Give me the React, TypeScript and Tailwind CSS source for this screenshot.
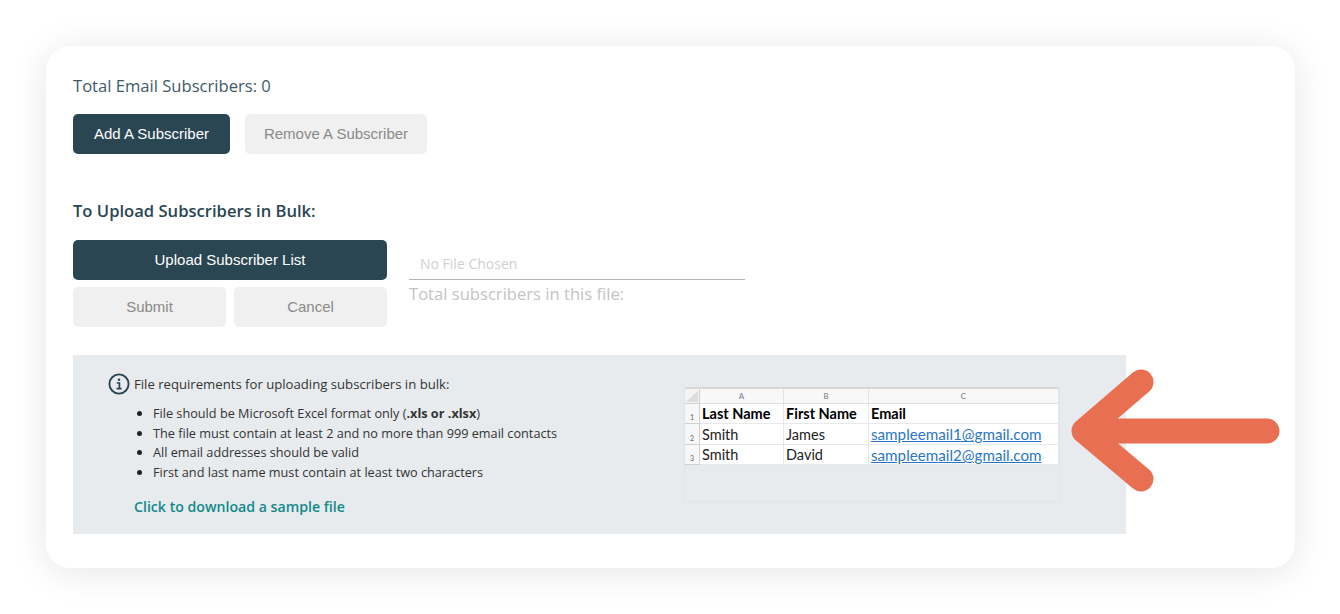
import React from 'react';

const OPEN = "font-['Open_Sans',sans-serif]";
const ARIAL = "font-['Liberation_Sans',Arial,sans-serif]";

function SolidButton({ label, className = '' }: { label: string; className?: string }) {
  return (
    <button className={`h-10 rounded-[5px] bg-[#2a4653] text-[15px] text-white ${ARIAL} ${className}`}>
      {label}
    </button>
  );
}

function MutedButton({ label, className = '' }: { label: string; className?: string }) {
  return (
    <button className={`h-10 rounded-[5px] bg-[#f0f0f0] text-[15px] text-[#8a8a8a] ${ARIAL} ${className}`}>
      {label}
    </button>
  );
}

function SampleSheet() {
  const rows = [
    ['Smith', 'James', 'sampleemail1@gmail.com'],
    ['Smith', 'David', 'sampleemail2@gmail.com'],
  ];
  const cell = 'border-r border-b border-[#e6e8e9] pt-[2px] pl-[2px] flex items-center';
  const rowHead = 'flex items-end justify-center border-r border-b border-[#d0d0d0] bg-[#f7f7f7] pb-[2px] text-[7px] text-[#666]';
  return (
    <div className="mt-[32px] -ml-[1px] h-[115px] w-[376px] shrink-0 border border-t-0 border-[#e2e5e8] font-['Lato',sans-serif]">
      <div className="grid grid-cols-[15px_84px_85px_1fr] grid-rows-[15px_20px_21px_20px] border-t-2 border-[#d8d8d8] bg-white text-[14.5px] leading-none text-[#222]">
        <div className="relative border-r border-b border-[#d0d0d0] bg-[#f4f4f4]">
          <svg viewBox="0 0 14 14" className="absolute inset-0 h-full w-full">
            <path d="M1 13 L13 13 L13 2 Z" fill="#dcdcdc" />
          </svg>
        </div>
        {['A', 'B', 'C'].map((h) => (
          <div key={h} className="flex items-center justify-center border-r border-b border-[#e2e2e2] bg-[#f8f8f8] text-[8px] text-[#777]">
            {h}
          </div>
        ))}
        <div className={rowHead}>1</div>
        <div className={`${cell} font-bold text-black`}>Last Name</div>
        <div className={`${cell} font-bold text-black`}>First Name</div>
        <div className={`${cell} font-bold text-black`}>Email</div>
        {rows.map((r, i) => (
          <React.Fragment key={i}>
            <div className={rowHead}>{i + 2}</div>
            <div className={cell}>{r[0]}</div>
            <div className={cell}>{r[1]}</div>
            <div className={`${cell} text-[15.2px] text-[#2a76c6] underline`}>{r[2]}</div>
          </React.Fragment>
        ))}
      </div>
    </div>
  );
}

export default function App() {
  return (
    <div className="h-[614px] w-[1340px] bg-white pt-[46px] pl-[46px]">
      <div className={`relative h-[522px] w-[1249px] rounded-[24px] bg-white pt-[28px] pl-[27px] shadow-[0_4px_36px_rgba(0,0,0,0.1)] ${OPEN}`}>
        <p className="text-[16.6px] leading-6 text-[#3f5a66]">Total Email Subscribers: 0</p>

        <div className="mt-[16px] flex gap-[15px]">
          <SolidButton label="Add A Subscriber" className="w-[157px]" />
          <MutedButton label="Remove A Subscriber" className="w-[182px]" />
        </div>

        <h2 className="mt-[45px] text-[16.6px] leading-6 font-semibold text-[#2a4653]">To Upload Subscribers in Bulk:</h2>

        <div className="mt-[17px] flex gap-[22px]">
          <div className="w-[314px]">
            <SolidButton label="Upload Subscriber List" className="w-full" />
            <div className="mt-[7px] flex gap-[8px]">
              <MutedButton label="Submit" className="w-[153px]" />
              <MutedButton label="Cancel" className="w-[153px]" />
            </div>
          </div>
          <div className="w-[336px] pt-[12px]">
            <div className="h-[28px] border-b border-[#b5b5b5] pl-[11px] text-[14px] leading-[23px] text-[#cfcfcf]">No File Chosen</div>
            <p className="mt-[2px] text-[16.6px] leading-6 text-[#c4c4c4]">Total subscribers in this file:</p>
          </div>
        </div>

        <div className="mt-[28px] flex h-[179px] w-[1053px] bg-[#e7ebee]">
          <div className="w-[612px] pt-[18px] pl-[35px]">
            <div className="flex items-center gap-[4px] text-[13.15px] leading-[22px] text-[#333]">
              <svg viewBox="0 0 22 22" className="h-[22px] w-[22px]" fill="none" stroke="#2a4653">
                <circle cx="11" cy="11" r="9.6" strokeWidth="1.9" />
                <circle cx="11" cy="6.8" r="1.3" fill="#2a4653" stroke="none" />
                <path d="M8.8 10h2.6v5.4M8.6 15.6h5" strokeWidth="1.7" />
              </svg>
              File requirements for uploading subscribers in bulk:
            </div>
            <ul className="mt-[9px] list-disc pl-[45px] text-[12.7px] leading-[19.7px] text-[#333] marker:text-[#222]">
              <li>File should be Microsoft Excel format only (<b>.xls or .xlsx</b>)</li>
              <li>The file must contain at least 2 and no more than 999 email contacts</li>
              <li>All email addresses should be valid</li>
              <li>First and last name must contain at least two characters</li>
            </ul>
            <a className="mt-[14px] ml-[26px] block text-[14.15px] leading-5 font-semibold text-[#12898a]">Click to download a sample file</a>
          </div>
          <SampleSheet />
        </div>

        <svg viewBox="0 0 210 124" className="absolute top-[323px] left-[1024px] h-[124px] w-[210px]" fill="none" stroke="#e96f52" strokeWidth="25" strokeLinecap="round" strokeLinejoin="round">
          <path d="M197 62H14M71 13L14 62L71 110" />
        </svg>
      </div>
    </div>
  );
}
